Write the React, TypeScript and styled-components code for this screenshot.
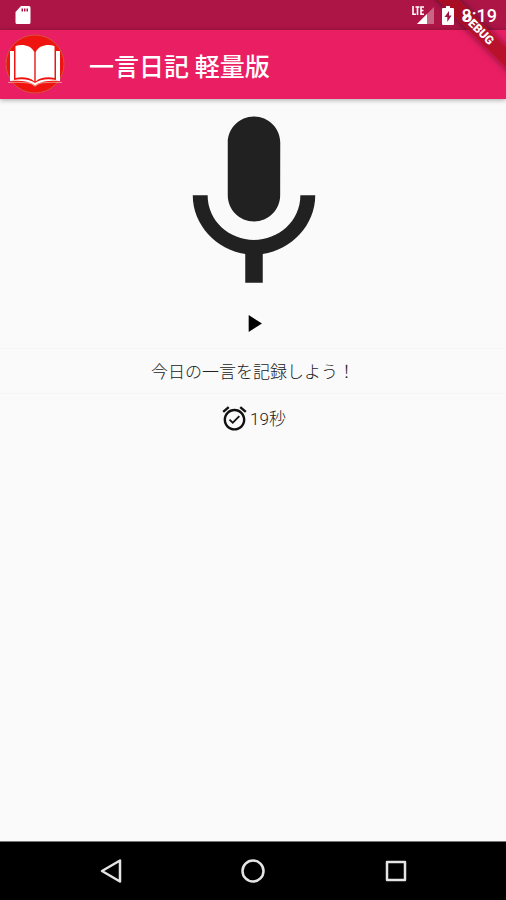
import React from "react";
import styled, { createGlobalStyle } from "styled-components";

const GlobalStyle = createGlobalStyle`
  * { box-sizing: border-box; }
  body {
    margin: 0;
    background: #fafafa;
    color: #212121;
    font-family: Roboto, "Noto Sans CJK JP", sans-serif;
  }
`;

const Screen = styled.div`
  position: relative;
  min-height: 100vh;
  display: flex;
  flex-direction: column;
  overflow: hidden;
`;

const StatusBar = styled.div`
  display: flex;
  align-items: center;
  justify-content: space-between;
  height: 30px;
  padding: 0 9px 0 15px;
  background: #ad1547;
  color: #fff;
`;

const StatusIcons = styled.div`
  position: relative;
  z-index: 2;
  display: flex;
  align-items: center;
  gap: 8px;
`;

const Clock = styled.time`
  padding-top: 2px;
  font-size: 18px;
  line-height: 20px;
  font-weight: 500;
`;

const AppBar = styled.header`
  display: flex;
  align-items: center;
  gap: 24px;
  height: 69px;
  padding: 0 4px;
  background: #e91e63;
  color: #fff;
  box-shadow: 0 1px 5px rgba(0, 0, 0, 0.35);
`;

const Title = styled.h1`
  margin: 0;
  font-family: "Noto Sans CJK JP", sans-serif;
  font-size: 25px;
  line-height: 32px;
  font-weight: 500;
`;

const Content = styled.main`
  flex: 1;
  display: flex;
  flex-direction: column;
  align-items: center;
`;

const IconButton = styled.button`
  display: flex;
  padding: 0;
  border: 0;
  background: none;
  color: inherit;
  cursor: pointer;
`;

const RecordButton = styled(IconButton)`
  padding-left: 2px;
`;

const PlayButton = styled(IconButton)`
  padding: 0 10px 10px;
  color: #000;
`;

const Prompt = styled.p`
  align-self: stretch;
  margin: 0;
  padding: 11px 0 9px;
  border-top: 1px solid #f6f6f6;
  border-bottom: 1px solid #f6f6f6;
  text-align: center;
  font-size: 17px;
  line-height: 24px;
  font-weight: 300;
`;

const Timer = styled.div`
  display: flex;
  align-items: center;
  gap: 1px;
  padding: 10px 0;
  font-size: 17px;
  line-height: 24px;
  font-weight: 300;
`;

const NavBar = styled.nav`
  display: grid;
  grid-template-columns: repeat(3, 1fr);
  justify-items: center;
  align-items: center;
  height: 59px;
  padding: 0 39px 0 40px;
  background: #000;
  border-top: 1px solid #777;
`;

const NavButton = styled(IconButton)`
  color: #e4e4e4;
`;

const DebugBanner = styled.div`
  position: absolute;
  z-index: 1;
  top: 22px;
  right: -32px;
  width: 120px;
  height: 15px;
  transform: rotate(45deg);
  background: rgba(165, 12, 24, 0.72);
  box-shadow: 0 0 7px rgba(0, 0, 0, 0.5);
  color: #fff;
  text-align: center;
  font-size: 12px;
  line-height: 15px;
  font-weight: 900;
`;

const SdCard = () => (
  <svg width="16" height="20" viewBox="0 0 16 20" aria-hidden="true">
    <path
      fill="#fff"
      fillRule="evenodd"
      d="M6 1h8a1.500 1.500 0 0 1 1.500 1.500v15a1.500 1.500 0 0 1-1.500 1.500H2a1.500 1.500 0 0 1-1.500-1.500V7zM6.500 3.500v3h1.500v-3zm2.500 0v3h1.500v-3zm2.500 0v3H13v-3z"
    />
  </svg>
);

const Signal = () => (
  <svg width="22" height="20" viewBox="0 0 22 20" aria-hidden="true">
    <path fill="#fff" fillOpacity=".35" d="M22 2v17H5z" />
    <path fill="#fff" d="M15 9v10H5z" />
    <path
      fill="none"
      stroke="#fff"
      strokeWidth="1.600"
      d="M1 1v8.300h3M3.500 2h4M5.500 2v8M12 2H9v7.300h3M9 5.500h2.500"
    />
  </svg>
);

const Battery = () => (
  <svg width="12" height="20" viewBox="0 0 12 20" aria-hidden="true">
    <path
      fill="#fff"
      fillRule="evenodd"
      d="M4 1h4v2h3a1 1 0 0 1 1 1v15a1 1 0 0 1-1 1H1a1 1 0 0 1-1-1V4a1 1 0 0 1 1-1h3zM7 6l-4.500 6h2.800v5l4.300-6.500H7z"
    />
  </svg>
);

const BookLogo = () => (
  <svg width="61" height="61" viewBox="0 0 61 61" role="img" aria-label="一言日記">
    <circle cx="31" cy="30" r="29" fill="#f01410" stroke="#d4553a" />
    <path fill="#fff" d="M6 17h4v29c9-2 17 0 21 3 4-3 12-5 21-3V17h4v30c-10-1-18 0-22 3l-3 2-3-2c-4-3-12-4-22-3z" />
    <path fill="none" stroke="#ef8a80" strokeWidth="1.200" d="M4 48.500c10-.5 20-.5 24 1.500l3 2 3-2c4-2 14-2 24-1.500" />
    <path fill="#fff" d="M11.500 12c7-2 15-1 18.800 6v29.500c-4-4-12-5-18.800-3.500zM50.500 12c-7-2-15-1-18.800 6v29.500c4-4 12-5 18.800-3.500z" />
  </svg>
);

const Mic = () => (
  <svg width="210" height="210" viewBox="0 0 24 24" fill="currentColor" aria-hidden="true">
    <path d="M12 14c1.660 0 2.990-1.340 2.990-3L15 5c0-1.660-1.340-3-3-3S9 3.340 9 5v6c0 1.660 1.340 3 3 3zm5.300-3c0 3-2.540 5.100-5.300 5.100S6.700 14 6.700 11H5c0 3.410 2.720 6.230 6 6.720V21h2v-3.280c3.280-.480 6-3.300 6-6.720h-1.700z" />
  </svg>
);

const Play = () => (
  <svg width="29" height="29" viewBox="0 0 24 24" fill="currentColor" aria-hidden="true">
    <path d="M8 5v14l11-7z" />
  </svg>
);

const AlarmOn = () => (
  <svg width="29" height="29" viewBox="0 0 24 24" fill="#111" aria-hidden="true">
    <path d="M22 5.720l-4.600-3.860-1.290 1.530 4.600 3.860L22 5.720zM7.880 3.390L6.600 1.860 2 5.710l1.290 1.530 4.590-3.850zM12 4c-4.970 0-9 4.030-9 9s4.020 9 9 9c4.970 0 9-4.030 9-9s-4.030-9-9-9zm0 16c-3.870 0-7-3.130-7-7s3.130-7 7-7 7 3.130 7 7-3.130 7-7 7zm-1.460-5.470L8.410 12.400l-1.060 1.060 3.180 3.180 6-6-1.060-1.060-4.930 4.950z" />
  </svg>
);

const NavIcon = ({ children }: { children: React.ReactNode }) => (
  <svg
    width="26"
    height="26"
    viewBox="0 0 26 26"
    fill="none"
    stroke="currentColor"
    strokeWidth="2.500"
    strokeLinejoin="round"
    aria-hidden="true"
  >
    {children}
  </svg>
);

export default function App() {
  return (
    <Screen>
      <GlobalStyle />
      <StatusBar>
        <SdCard />
        <StatusIcons>
          <Signal />
          <Battery />
          <Clock>8:19</Clock>
        </StatusIcons>
      </StatusBar>
      <AppBar>
        <BookLogo />
        <Title>一言日記 軽量版</Title>
      </AppBar>
      <Content>
        <RecordButton type="button" aria-label="録音">
          <Mic />
        </RecordButton>
        <PlayButton type="button" aria-label="再生">
          <Play />
        </PlayButton>
        <Prompt>今日の一言を記録しよう！</Prompt>
        <Timer>
          <AlarmOn />
          <span>19秒</span>
        </Timer>
      </Content>
      <NavBar>
        <NavButton type="button" aria-label="戻る">
          <NavIcon>
            <path d="M22 2.500v21L4 13z" />
          </NavIcon>
        </NavButton>
        <NavButton type="button" aria-label="ホーム">
          <NavIcon>
            <circle cx="13" cy="13" r="10.500" />
          </NavIcon>
        </NavButton>
        <NavButton type="button" aria-label="履歴">
          <NavIcon>
            <path d="M4 4h18v18H4z" />
          </NavIcon>
        </NavButton>
      </NavBar>
      <DebugBanner>DEBUG</DebugBanner>
    </Screen>
  );
}
